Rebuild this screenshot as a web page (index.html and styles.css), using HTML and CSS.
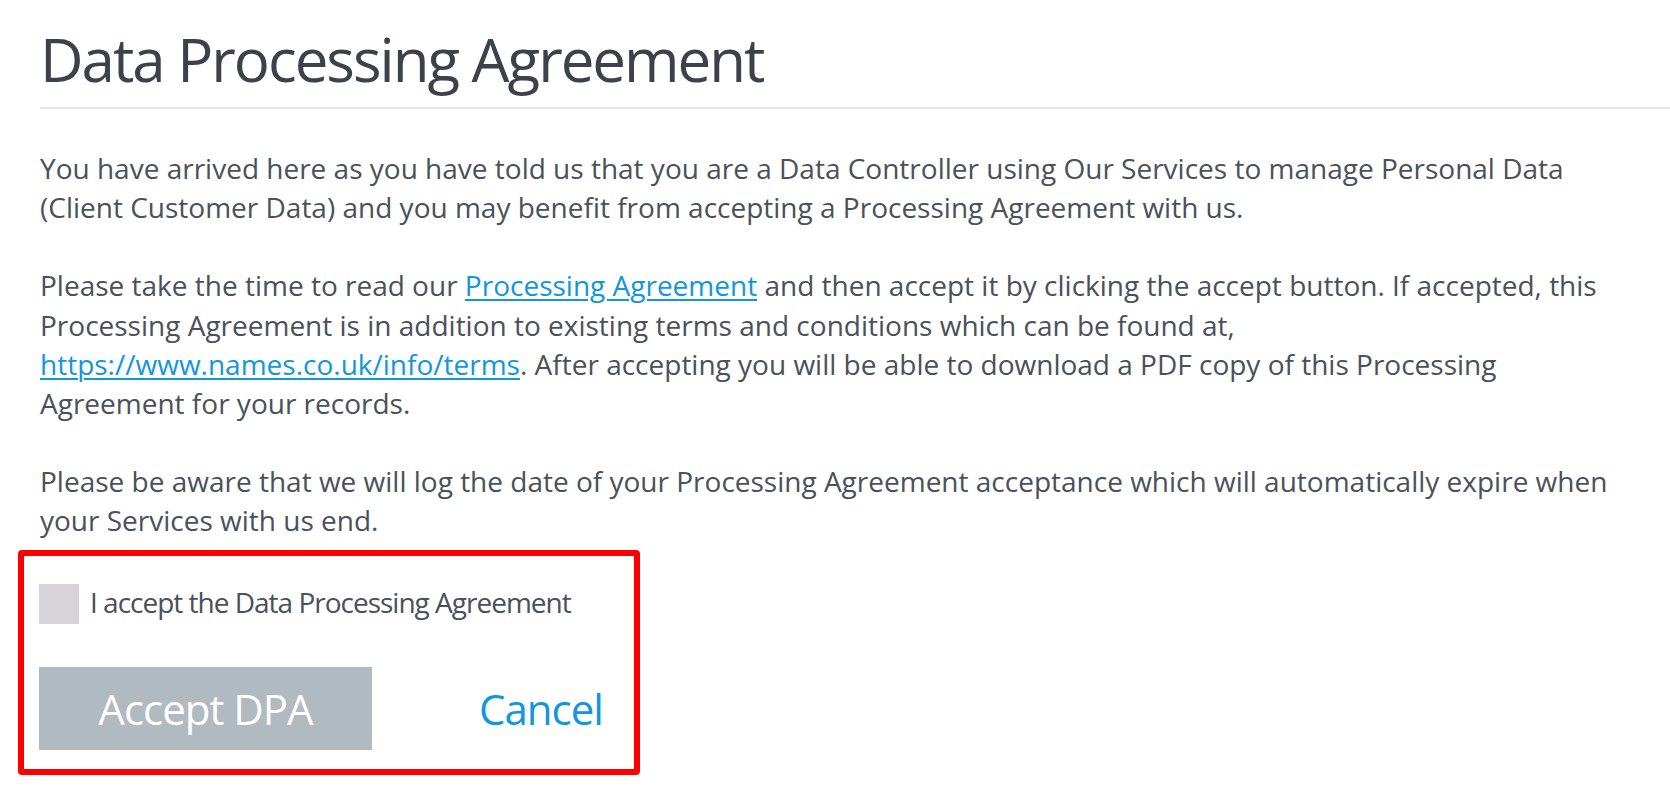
FILE: index.html
```html
<!DOCTYPE html>
<html lang="en">
<head>
    <meta charset="UTF-8">
    <meta name="viewport" content="width=device-width, initial-scale=1.0">
    <title>Data Processing Agreement</title>
    <link rel="stylesheet" href="styles.css">
</head>
<body>
    <div class="page">
        <h1 class="page-title">Data Processing Agreement</h1>

        <div class="content">
            <p>You have arrived here as you have told us that you are a Data Controller using Our Services to manage Personal Data (Client Customer Data) and you may benefit from accepting a Processing Agreement with us.</p>

            <p>Please take the time to read our <a href="#">Processing Agreement</a> and then accept it by clicking the accept button. If accepted, this Processing Agreement is in addition to existing terms and conditions which can be found at, <a href="#">https://www.names.co.uk/info/terms</a>. After accepting you will be able to download a PDF copy of this Processing Agreement for your records.</p>

            <p>Please be aware that we will log the date of your Processing Agreement acceptance which will automatically expire when your Services with us end.</p>

            <form class="dpa-form">
                <label class="accept-row">
                    <input type="checkbox" class="accept-box" id="accept">
                    <span class="accept-label">I accept the Data Processing Agreement</span>
                </label>

                <div class="actions">
                    <button type="button" class="btn-accept" id="acceptBtn" disabled>Accept DPA</button>
                    <a href="#" class="btn-cancel">Cancel</a>
                </div>
            </form>
        </div>
    </div>

    <script>
        document.getElementById("accept").addEventListener("change", function () {
            document.getElementById("acceptBtn").disabled = !this.checked;
        });
    </script>
</body>
</html>
```

FILE: styles.css
```css
/* Page */
body {
    margin: 0;
    background: #fff;
    font-family: 'Open Sans', 'Noto Sans', sans-serif;
    color: #4a515b;
}

.page {
    padding-left: 40px;
}

/* Title */
.page-title {
    margin: 0;
    padding: 23px 0 12px;
    font-size: 60px;
    font-weight: 400;
    line-height: 72px;
    letter-spacing: -2px;
    color: #3c424a;
    border-bottom: 2px solid #e4e4e4;
}

/* Body copy */
.content {
    max-width: 1588px;
    padding-top: 40px;
}

.content p {
    margin: 0 0 39px;
    font-size: 28px;
    line-height: 1.4;
}

.content p:last-of-type {
    margin-bottom: 0;
}

.content a {
    color: #1296dc;
    text-decoration-thickness: 2px;
    text-underline-offset: 3px;
}

/* Accept form */
.dpa-form {
    box-sizing: border-box;
    width: 622px;
    margin: 9px 0 0 -22px;
    padding: 28px 20px 19px 15px;
    border: 6px solid #ff0000;
    border-radius: 4px;
}

.accept-row {
    display: flex;
    align-items: flex-start;
    gap: 11px;
    cursor: pointer;
}

.accept-box {
    appearance: none;
    -webkit-appearance: none;
    flex: none;
    width: 40px;
    height: 40px;
    margin: 0;
    background: #d6d3d9;
    border: none;
    cursor: pointer;
}

.accept-box:checked {
    background: #1296dc;
}

.accept-label {
    font-size: 28px;
    line-height: 36px;
    letter-spacing: -1px;
}

.actions {
    display: flex;
    align-items: center;
    margin-top: 43px;
}

.btn-accept {
    flex: none;
    width: 333px;
    height: 83px;
    padding: 0;
    border: none;
    background: #b1b9c1;
    color: #fff;
    font-family: inherit;
    font-size: 42px;
    letter-spacing: -1px;
}

.btn-accept:not(:disabled) {
    background: #1296dc;
    cursor: pointer;
}

.btn-cancel {
    margin-left: 107px;
    font-size: 42px;
    letter-spacing: -1px;
    color: #1296dc;
    text-decoration: none;
}
```
